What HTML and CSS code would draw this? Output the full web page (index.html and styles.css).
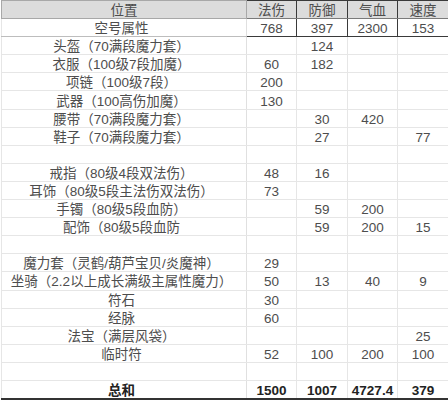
FILE: index.html
```html
<!DOCTYPE html>
<html>
<head>
<meta charset="utf-8">
<link rel="stylesheet" href="styles.css">
</head>
<body>
<table class="sheet">
  <colgroup>
    <col class="c-pos"><col class="c-num"><col class="c-num2"><col class="c-num"><col class="c-num2">
  </colgroup>
  <tr class="head">
    <th class="pos">位置</th><th class="sel first">法伤</th><th class="sel">防御</th><th class="sel">气血</th><th class="sel">速度</th>
  </tr>
  <tr class="base">
    <td class="pos">空号属性</td><td class="sel">768</td><td class="sel">397</td><td class="sel">2300</td><td class="sel">153</td>
  </tr>
  <tr><td class="pos">头盔（70满段魔力套）</td><td></td><td>124</td><td></td><td></td></tr>
  <tr><td class="pos">衣服（100级7段加魔）</td><td>60</td><td>182</td><td></td><td></td></tr>
  <tr><td class="pos">项链（100级7段）</td><td>200</td><td></td><td></td><td></td></tr>
  <tr><td class="pos">武器（100高伤加魔）</td><td>130</td><td></td><td></td><td></td></tr>
  <tr><td class="pos">腰带（70满段魔力套）</td><td></td><td>30</td><td>420</td><td></td></tr>
  <tr><td class="pos">鞋子（70满段魔力套）</td><td></td><td>27</td><td></td><td>77</td></tr>
  <tr><td class="pos"></td><td></td><td></td><td></td><td></td></tr>
  <tr><td class="pos">戒指（80级4段双法伤）</td><td>48</td><td>16</td><td></td><td></td></tr>
  <tr><td class="pos">耳饰（80级5段主法伤双法伤）</td><td>73</td><td></td><td></td><td></td></tr>
  <tr><td class="pos">手镯（80级5段血防）</td><td></td><td>59</td><td>200</td><td></td></tr>
  <tr><td class="pos">配饰（80级5段血防</td><td></td><td>59</td><td>200</td><td>15</td></tr>
  <tr><td class="pos"></td><td></td><td></td><td></td><td></td></tr>
  <tr><td class="pos">魔力套（灵鹤/葫芦宝贝/炎魔神）</td><td>29</td><td></td><td></td><td></td></tr>
  <tr><td class="pos">坐骑（2.2以上成长满级主属性魔力）</td><td>50</td><td>13</td><td>40</td><td>9</td></tr>
  <tr><td class="pos">符石</td><td>30</td><td></td><td></td><td></td></tr>
  <tr><td class="pos">经脉</td><td>60</td><td></td><td></td><td></td></tr>
  <tr><td class="pos">法宝（满层风袋）</td><td></td><td></td><td></td><td>25</td></tr>
  <tr><td class="pos">临时符</td><td>52</td><td>100</td><td>200</td><td>100</td></tr>
  <tr><td class="pos"></td><td></td><td></td><td></td><td></td></tr>
  <tr class="total"><td class="pos">总和</td><td>1500</td><td>1007</td><td>4727.4</td><td>379</td></tr>
</table>
</body>
</html>
```
FILE: styles.css
```css
html, body {
  margin: 0;
  padding: 0;
  background: #ffffff;
}
body {
  width: 448px;
  height: 402px;
  overflow: hidden;
}
.sheet {
  margin-left: 1px;
  width: 447px;
  table-layout: fixed;
  border-collapse: collapse;
  font-family: "Liberation Sans", "Noto Sans CJK SC", sans-serif;
  font-size: 13.5px;
  color: #4d4d4d;
  border-left: 1px solid #9a9a9a;
}
.c-pos { width: 245px; }
.c-num { width: 50px; }
.c-num2 { width: 51px; }
.sheet tr {
  height: 18.1px;
}
.sheet th,
.sheet td {
  height: 14px;
  padding: 3px 0 0 0;
  line-height: 14px;
  text-align: center;
  vertical-align: middle;
  white-space: nowrap;
  overflow: hidden;
  border: 1px solid #e6e6e6;
  font-weight: normal;
}
.sheet td.pos {
  padding-right: 5px;
  border-right-color: #e0e0e0;
}
.head {
  height: 18px;
}
.head th {
  background: #dcdcdc;
  color: #4d4d4d;
  border: 1px solid #a8a8a8;
}
.head th.sel {
  border-left: 1px solid #3a3a3a;
  border-right: 1px solid #3a3a3a;
  border-top: 1px solid #3a3a3a;
  border-bottom: 1px solid #7a7a7a;
}
.base td {
  border-bottom: 1px solid #bdbdbd;
}
.base td.sel {
  border: 1px solid #3a3a3a;
}
.total td {
  font-weight: bold;
  color: #222222;
  border-bottom: 2px solid #333333;
}
```
